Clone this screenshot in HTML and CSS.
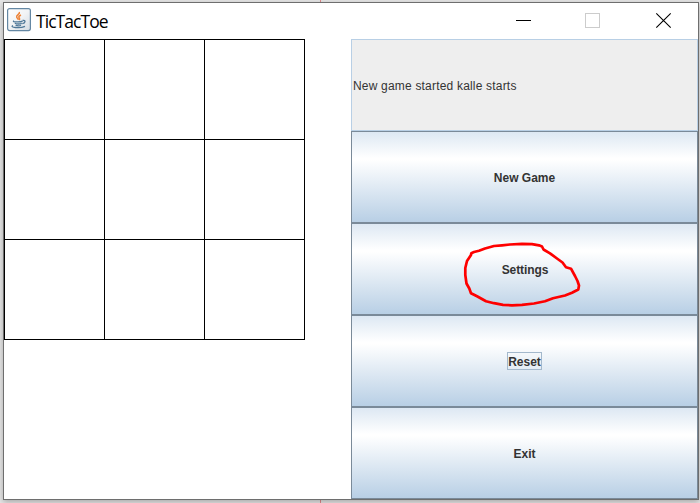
FILE: index.html
```html
<!DOCTYPE html>
<html lang="en">
<head>
<meta charset="utf-8">
<title>TicTacToe</title>
<link rel="stylesheet" href="styles.css">
</head>
<body>
<div class="desktop">
  <main class="window">
    <header class="titlebar">
      <svg class="app-icon" viewBox="0 0 24 24">
        <defs><linearGradient id="tile" x1="0" y1="0" x2="1" y2="1"><stop offset="0" stop-color="#fff"/><stop offset=".5" stop-color="#f1f3f5"/><stop offset="1" stop-color="#d3dbe3"/></linearGradient></defs>
        <rect x=".6" y=".6" width="22.8" height="22" rx="2" fill="url(#tile)" stroke="#6487a3" stroke-width="1.2"/>
        <path d="M12.300 4c1.200 2.200-3.600 3-2.600 5.200.4 1 1.400 1.400 1.700 2.600M14 7c-2.800 1.200-2.500 2.200-1.500 3.300.4.600 0 1.200-.5 1.700" fill="none" stroke="#ee8438" stroke-width="1.500"/>
        <path d="M7 12.700c-1.500.900 0 1.300 3.800 1.200 2.200 0 3.700-.300 4.700-.800M7.800 15.300c1.500.900 5.200.900 7 0M8.600 17.200c1.500.700 4.200.700 5.400 0M6 17.500c-4 1.700 6.500 3.400 12 .8M15.600 12.500c3.600-.600 2.900 2.500-.3 3.200" fill="none" stroke="#4f7898" stroke-width="1.300"/>
      </svg>
      <h1 class="title">TicTacToe</h1>
      <svg class="controls" viewBox="0 0 182 36">
        <path d="M0 17.500h15" stroke="#000"/>
        <rect x="69.500" y="10.500" width="14" height="14" fill="none" stroke="#ccc"/>
        <path d="M140.300 10.300l14.400 14.400M154.700 10.300l-14.400 14.400" stroke="#000" stroke-width="1.100"/>
      </svg>
    </header>
    <div class="content">
      <div class="board">
        <div class="cell"></div><div class="cell"></div><div class="cell"></div>
        <div class="cell"></div><div class="cell"></div><div class="cell"></div>
        <div class="cell"></div><div class="cell"></div><div class="cell"></div>
      </div>
      <div class="panel">
        <div class="status"><span class="status-text">New game started kalle starts</span></div>
        <button class="action"><span class="label">New Game</span></button>
        <button class="action"><span class="label settings">Settings</span></button>
        <button class="action"><span class="label focused">Reset</span></button>
        <button class="action"><span class="label">Exit</span></button>
      </div>
    </div>
  </main>
  <svg class="marker" viewBox="450 230 140 90">
    <path d="M471.300 253.200L474 252L479 250.700L485 248.500L494 246L502 245.300L510 244.500L522 243.900L532 244.100L539 245.300L542 246.500L543.500 249.500L550 253.300L557 258.500L562.500 262.500L566 267.200L571 268.700L575 276L577.500 281L579 285.500L578.300 289.500L572 292.700L565 295.500L553 298.300L545 301.300L534 303.500L522 304.800L512 305.300L503 304.800L494 303.200L486 301.200L477 296.300L471 293.300L469.300 288.500L466.500 283.500L465.300 275L465.300 268L467 261L471 255Z"/>
  </svg>
</div>
</body>
</html>
```
FILE: styles.css
```css
* { box-sizing: border-box; }

body { margin: 0; }

.desktop {
  position: relative;
  width: 700px;
  height: 503px;
  padding: 2px 1px 3px 3px;
  overflow: hidden;
  background: linear-gradient(#e08a8c, #e08a8c) 320px 0 / 1px 100% no-repeat, #e6e6e6;
}

.window {
  width: 696px;
  height: 498px;
  border: 1px solid #6e6e6e;
  background: #fff;
  box-shadow: 0 2px 6px rgba(0, 0, 0, .28);
}

.titlebar {
  display: flex;
  height: 36px;
  align-items: flex-start;
}

.app-icon {
  width: 24px;
  height: 24px;
  margin: 5px 0 0 3px;
}

.title {
  margin: 5px 0 0 5px;
  font: 400 17.5px/26px "Open Sans", "Noto Sans", sans-serif;
  letter-spacing: -.95px;
  color: #000;
}

.controls {
  width: 182px;
  height: 36px;
  margin-left: auto;
}

.content {
  display: flex;
  justify-content: space-between;
  height: 460px;
}

.board {
  display: grid;
  grid-template-columns: repeat(3, 100px);
  grid-template-rows: repeat(3, 100px);
  width: 301px;
  height: 301px;
  border: solid #000;
  border-width: 1px 0 0 1px;
}

.cell {
  border: solid #000;
  border-width: 0 1px 1px 0;
}

.panel {
  display: grid;
  grid-template-rows: repeat(5, 92px);
  width: 347px;
}

.status {
  display: flex;
  align-items: center;
  padding: 2px 0 0 1px;
  border: 1px solid #b8cfe5;
  background: #eee;
  color: #333;
  font: 12px/16px "Liberation Sans", Arial, sans-serif;
  letter-spacing: .19px;
}

.action {
  display: flex;
  align-items: center;
  justify-content: center;
  padding: 0;
  border: 1px solid #7a8a99;
  border-radius: 0;
  background: linear-gradient(#dde8f3 0%, #fff 29%, #fff 31%, #b8cfe5 100%);
  color: #333;
  font: bold 12px/16px "Liberation Sans", Arial, sans-serif;
}

.label {
  padding: 1px 0 0;
}

.settings {
  padding-left: 1px;
  letter-spacing: -.1px;
}

.focused {
  height: 18px;
  border: 1px solid #a3b8cc;
  line-height: 17px;
}

.marker {
  position: absolute;
  left: 450px;
  top: 230px;
  width: 140px;
  height: 90px;
  pointer-events: none;
}

.marker path {
  fill: none;
  stroke: #fe0000;
  stroke-width: 2.7;
  stroke-linejoin: round;
}
```
